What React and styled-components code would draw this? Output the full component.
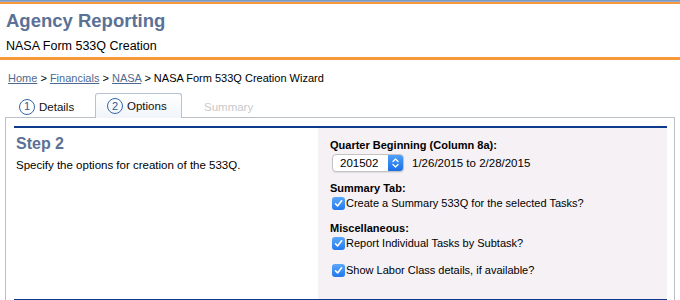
import React from "react";
import styled, { createGlobalStyle } from "styled-components";

const GlobalStyle = createGlobalStyle`
  html, body {
    margin: 0;
    padding: 0;
    background: #ffffff;
  }
  body {
    font-family: "Liberation Sans", Arial, sans-serif;
    font-size: 12px;
    color: #000;
  }
`;

const Page = styled.div`
  width: 680px;
  height: 300px;
  overflow: hidden;
`;

const TopBar = styled.div`
  height: 2px;
  background: linear-gradient(#6f8fbd, #9fb4d3);
  border-bottom: 2px solid #f7983a;
`;

const Header = styled.header`
  padding: 5px 6px 0;
  border-bottom: 3px solid #f7983a;
  box-sizing: border-box;
  height: 56px;
`;

const AppTitle = styled.h1`
  margin: 0;
  font-size: 18.5px;
  line-height: 24px;
  font-weight: bold;
  color: #5b7196;
`;

const SubTitle = styled.div`
  font-size: 12.5px;
  line-height: 20px;
  margin-top: 3px;
`;

const Crumbs = styled.nav`
  padding: 10px 8px 0;
  font-size: 11px;
  line-height: 16px;
`;

const CrumbLink = styled.a`
  color: #4e6a90;
  text-decoration: underline;
`;

const TabRow = styled.div`
  display: flex;
  padding: 0 0 0 9px;
  margin-top: 7px;
  height: 25px;
  position: relative;
  z-index: 1;
`;

const Tab = styled.div`
  display: flex;
  align-items: center;
  gap: 4px;
  box-sizing: border-box;
  height: ${(p) => (p.$active ? "25px" : "24px")};
  margin-top: ${(p) => (p.$active ? "0" : "1px")};
  width: ${(p) => p.$w}px;
  padding-left: ${(p) => p.$pl}px;
  font-size: 11.5px;
  color: ${(p) => (p.$disabled ? "#c9c9c9" : "#111")};
  border: 1px solid ${(p) => (p.$active ? "#b6c2cf" : "transparent")};
  border-bottom: none;
  border-radius: 3px 3px 0 0;
  background: ${(p) =>
    p.$active ? "linear-gradient(#ffffff, #f0f5fa)" : "transparent"};
`;

const StepCircle = styled.span`
  display: inline-flex;
  align-items: center;
  justify-content: center;
  width: 14px;
  height: 14px;
  border: 1px solid #3566a8;
  border-radius: 50%;
  font-size: 11px;
  color: #2f5a96;
  line-height: 1;
`;

const Panel = styled.section`
  margin: -1px 5px 0 5px;
  border: 1px solid #b8bfc7;
  border-bottom: none;
  padding: 8px 7px 0 8px;
  height: 190px;
  box-sizing: border-box;
`;

const StepBody = styled.div`
  display: grid;
  grid-template-columns: 304px 1fr;
  border-top: 2px solid #0d3a8c;
  border-bottom: 2px solid #0d3a8c;
  height: 175px;
  box-sizing: border-box;
`;

const LeftCol = styled.div`
  padding: 6px 2px;
`;

const StepTitle = styled.h2`
  margin: 0;
  font-size: 16px;
  line-height: 20px;
  font-weight: bold;
  color: #5b7196;
`;

const StepText = styled.p`
  margin: 3px 0 0;
  font-size: 11.5px;
  line-height: 16px;
`;

const RightCol = styled.div`
  background: #f5f1f5;
  padding: 9px 12px;
`;

const FieldLabel = styled.div`
  font-weight: bold;
  font-size: 11px;
  line-height: 16px;
  margin-top: ${(p) => p.$mt || 0}px;
`;

const SelectRow = styled.div`
  display: flex;
  align-items: center;
  gap: 8px;
  margin-top: 1px;
  font-size: 11.5px;
`;

const FakeSelect = styled.div`
  display: flex;
  width: 72px;
  height: 18px;
  margin-left: 2px;
  box-sizing: border-box;
  border: 1px solid #c3c3c3;
  border-radius: 4px;
  background: #fff;
  overflow: hidden;
  box-shadow: 0 1px 1px rgba(0, 0, 0, 0.08);
`;

const SelectValue = styled.span`
  flex: 1;
  padding-left: 7px;
  font-size: 11.5px;
  line-height: 16px;
`;

const SelectArrow = styled.span`
  width: 15px;
  background: linear-gradient(#4ea0f8, #1b6fe6);
  display: flex;
  align-items: center;
  justify-content: center;
`;

const CheckRow = styled.label`
  display: flex;
  align-items: center;
  gap: 1px;
  margin-left: 2px;
  margin-top: ${(p) => p.$mt || 0}px;
  font-size: 11px;
  line-height: 15px;
`;

const Box = styled.span`
  width: 13px;
  height: 13px;
  border-radius: 3px;
  background: linear-gradient(#5aa8fb, #2277ea);
  display: inline-flex;
  align-items: center;
  justify-content: center;
`;

const Check = () => (
  <Box>
    <svg width="9" height="9" viewBox="0 0 9 9">
      <path
        d="M1.5 4.8 L3.6 6.9 L7.6 1.8"
        fill="none"
        stroke="#fff"
        strokeWidth="1.6"
        strokeLinecap="round"
        strokeLinejoin="round"
      />
    </svg>
  </Box>
);

const Arrows = () => (
  <svg width="9" height="12" viewBox="0 0 9 12">
    <path
      d="M2 4.5 L4.5 2 L7 4.5 M2 7.5 L4.5 10 L7 7.5"
      fill="none"
      stroke="#fff"
      strokeWidth="1.3"
      strokeLinecap="round"
      strokeLinejoin="round"
    />
  </svg>
);

const App = () => {
  return (
    <Page>
      <GlobalStyle />
      <TopBar />
      <Header>
        <AppTitle>Agency Reporting</AppTitle>
        <SubTitle>NASA Form 533Q Creation</SubTitle>
      </Header>

      <Crumbs>
        <CrumbLink href="#">Home</CrumbLink> &gt;{" "}
        <CrumbLink href="#">Financials</CrumbLink> &gt;{" "}
        <CrumbLink href="#">NASA</CrumbLink> &gt; NASA Form 533Q Creation
        Wizard
      </Crumbs>

      <TabRow>
        <Tab $w={86} $pl={9}>
          <StepCircle>1</StepCircle>Details
        </Tab>
        <Tab $w={87} $pl={11} $active>
          <StepCircle>2</StepCircle>Options
        </Tab>
        <Tab $w={80} $pl={21} $disabled>
          Summary
        </Tab>
      </TabRow>

      <Panel>
        <StepBody>
          <LeftCol>
            <StepTitle>Step 2</StepTitle>
            <StepText>Specify the options for creation of the 533Q.</StepText>
          </LeftCol>
          <RightCol>
            <FieldLabel>Quarter Beginning (Column 8a):</FieldLabel>
            <SelectRow>
              <FakeSelect>
                <SelectValue>201502</SelectValue>
                <SelectArrow>
                  <Arrows />
                </SelectArrow>
              </FakeSelect>
              <span>1/26/2015 to 2/28/2015</span>
            </SelectRow>

            <FieldLabel $mt={8}>Summary Tab:</FieldLabel>
            <CheckRow>
              <Check />
              Create a Summary 533Q for the selected Tasks?
            </CheckRow>

            <FieldLabel $mt={9}>Miscellaneous:</FieldLabel>
            <CheckRow>
              <Check />
              Report Individual Tasks by Subtask?
            </CheckRow>
            <CheckRow $mt={12}>
              <Check />
              Show Labor Class details, if available?
            </CheckRow>
          </RightCol>
        </StepBody>
      </Panel>
    </Page>
  );
};

export default App;
